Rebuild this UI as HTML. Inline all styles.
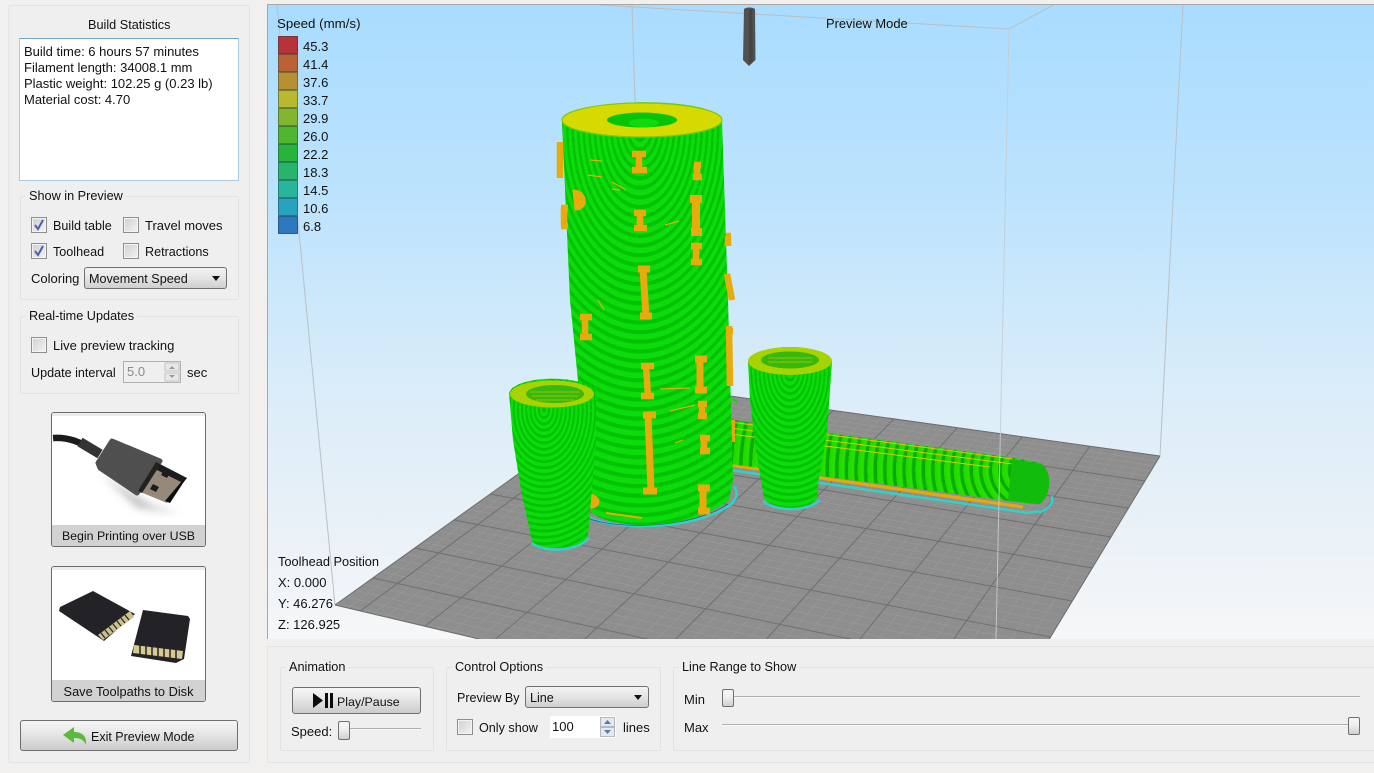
<!DOCTYPE html>
<html><head><meta charset="utf-8">
<style>
html,body{margin:0;padding:0;background:#f1f0ef;width:1374px;height:773px;overflow:hidden}
body{position:relative;font-family:"Liberation Sans",sans-serif;font-size:13px;color:#111}
.t{position:absolute;white-space:nowrap;line-height:16px;height:16px}
.s{font-size:12.6px}
.panel{position:absolute;background:#efefef;border:1px solid #e0e5e9;box-sizing:border-box;border-radius:2px}
.grp{position:absolute;border:1px solid #dfe3e6;box-sizing:border-box;background:#efefef;border-radius:2px}
.title{position:absolute;background:#efefef;padding:0 3px;white-space:nowrap;line-height:16px;font-size:12.7px}
.cb{position:absolute;width:16px;height:16px;box-sizing:border-box;border:1px solid #8e8f8f;background:linear-gradient(135deg,#cfcfcf,#f4f4f4);box-shadow:inset 0 0 0 1px #f4f4f4;}
.cb svg{position:absolute;left:0;top:0}
.combo{position:absolute;box-sizing:border-box;border:1px solid #707070;border-radius:3px;background:linear-gradient(#f3f3f3,#e6e6e6 45%,#cfcfcf);line-height:22px;padding-left:4px;white-space:nowrap;font-size:12.6px}
.combo:after{content:"";position:absolute;right:6px;top:8px;border-left:4px solid transparent;border-right:4px solid transparent;border-top:5px solid #111}
.btn{position:absolute;box-sizing:border-box;border:1px solid #6f6f6f;border-radius:3px;background:linear-gradient(#f6f6f6,#e8e8e8 40%,#cbcbcb)}
.handle{position:absolute;box-sizing:border-box;width:12px;border:1px solid #707070;border-radius:2px;background:linear-gradient(#f6f6f6,#eeeeee 45%,#cfcfcf)}
.groove{position:absolute;height:1px;background:#b0b0b0;box-shadow:0 1px 0 #fafafa}
.img{position:absolute;box-sizing:border-box;border:1px solid #6a6a6a;border-radius:3px;background:#fff;overflow:hidden}
.img .lab{position:absolute;left:0;right:0;bottom:0;height:21px;background:#d2d2d2;text-align:center;line-height:23px;white-space:nowrap}
.sw{position:absolute;left:278px;width:20px;height:18px;box-sizing:border-box;border:1px solid rgba(40,60,70,.45)}
</style></head><body>

<!-- left panel -->
<div class="panel" style="left:8px;top:5px;width:242px;height:758px"></div>
<div class="t" style="left:88px;top:17px;font-size:12.7px">Build Statistics</div>
<div style="position:absolute;left:19px;top:38px;width:220px;height:143px;box-sizing:border-box;background:#fff;border:1px solid #a9cbe4;border-top-color:#6ea5cf"></div>
<div class="t" style="left:24px;top:44px">Build time: 6 hours 57 minutes</div>
<div class="t" style="left:24px;top:60px">Filament length: 34008.1 mm</div>
<div class="t" style="left:24px;top:76px">Plastic weight: 102.25 g (0.23 lb)</div>
<div class="t" style="left:24px;top:92px">Material cost: 4.70</div>

<div class="grp" style="left:20px;top:196px;width:219px;height:104px"></div>
<div class="title" style="left:26px;top:188px">Show in Preview</div>
<div class="cb" style="left:31px;top:217px"><svg width="14" height="14"><path d="M3 7l3 4 5-9" fill="none" stroke="#4a60a8" stroke-width="2"/></svg></div>
<div class="t s" style="left:53px;top:218px">Build table</div>
<div class="cb" style="left:123px;top:217px"></div>
<div class="t" style="left:145px;top:218px">Travel moves</div>
<div class="cb" style="left:31px;top:243px"><svg width="14" height="14"><path d="M3 7l3 4 5-9" fill="none" stroke="#4a60a8" stroke-width="2"/></svg></div>
<div class="t s" style="left:53px;top:244px">Toolhead</div>
<div class="cb" style="left:123px;top:243px"></div>
<div class="t s" style="left:145px;top:244px">Retractions</div>
<div class="t" style="left:31px;top:271px">Coloring</div>
<div class="combo" style="left:84px;top:267px;width:143px;height:22px">Movement Speed</div>

<div class="grp" style="left:20px;top:316px;width:219px;height:78px"></div>
<div class="title" style="left:26px;top:308px">Real-time Updates</div>
<div class="cb" style="left:31px;top:337px"></div>
<div class="t" style="left:53px;top:338px">Live preview tracking</div>
<div class="t s" style="left:31px;top:365px">Update interval</div>
<div style="position:absolute;left:123px;top:361px;width:58px;height:22px;box-sizing:border-box;border:1px solid #b0b0b0;background:#efefef;color:#8a8a8a;line-height:20px;padding-left:3px">5.0
 <svg style="position:absolute;right:0;top:0" width="16" height="20"><rect x="1" y="1" width="14" height="8" fill="#e8e8e8" stroke="#c4c4c4"/><rect x="1" y="11" width="14" height="8" fill="#e8e8e8" stroke="#c4c4c4"/><path d="M5 7l3-3 3 3zM5 13l3 3 3-3z" fill="#999"/></svg></div>
<div class="t" style="left:187px;top:365px">sec</div>

<div class="img" style="left:51px;top:412px;width:155px;height:135px">
<svg width="153" height="113" style="position:absolute;left:0;top:0">
<defs><filter id="bl"><feGaussianBlur stdDeviation="4"/></filter></defs>
<rect width="153" height="3" fill="#ececec"/>
<path d="M50 62 L100 92 L125 100 L85 95Z" fill="#c4c4c4" filter="url(#bl)"/>
<path d="M1 25 C15 24 28 28 46 40" fill="none" stroke="#1b1b1b" stroke-width="6.500"/>
<path d="M28 29 L48 41" fill="none" stroke="#333" stroke-width="10"/>
<path d="M60 28 L108 48 L85 80 L48 55 L46 50Z" fill="#4f4f4f" stroke="#4f4f4f" stroke-width="5" stroke-linejoin="round"/>
<path d="M105 51 L133 66 L115 90 L86 78Z" fill="#96887a"/>
<path d="M104 49 L135 65 L131 70 L101 55Z" fill="#1c1c1c"/>
<path d="M130 68 L135 64 L118 90 L113 88Z" fill="#0e0e0e"/>
<path d="M112 57l6 3-3 5-6-3zM101 71l6 3-3 5-6-3z" fill="#1c1c1c"/>
<path d="M86 78 L104 49 L108 52 L90 80Z" fill="#222"/>
</svg><div class="lab" style="font-size:12.35px">Begin Printing over USB</div></div>

<div class="img" style="left:51px;top:566px;width:155px;height:136px">
<svg width="153" height="114" style="position:absolute;left:0;top:0">
<rect width="153" height="3" fill="#ececec"/>
<path d="M41 24 L83 47 L52 74 L7 44 L8 40Z" fill="#232327"/>
<path d="M82 50 L51 73 L46 68 L78 44Z" fill="#cbbf8a"/>
<path d="M49 66l4 5M53 63l4 5M57 60l4 5M61 57l4 5M65 54l4 5M69 51l4 5M73 48l4 5" stroke="#232327" stroke-width="1.200"/>
<path d="M91 43 L136 49 L138 52 L132 92 L124 96 L79 89Z" fill="#232327"/>
<path d="M82 78 L131 84 L130 92 L81 86Z" fill="#d6ca94"/>
<path d="M88 78v9M94 79v9M100 80v9M106 80v9M112 81v9M118 82v9M124 83v9" stroke="#232327" stroke-width="1.500"/>
</svg><div class="lab" style="font-size:12.8px">Save Toolpaths to Disk</div></div>

<div class="btn" style="left:20px;top:720px;width:218px;height:31px"></div>
<svg style="position:absolute;left:60px;top:725px" width="30" height="22"><path d="M3 10 L14 2 L14 7 C22 7 27 11 26 20 C24 15 20 13 14 13 L14 18Z" fill="#5cb93a"/></svg>
<div class="t" style="left:91px;top:729px;font-size:12.5px">Exit Preview Mode</div>

<!-- viewport -->
<svg style="position:absolute;left:0;top:0" width="1374" height="773" viewBox="0 0 1374 773">
<defs>
<linearGradient id="sky" x1="0" y1="0" x2="0" y2="1"><stop offset="0" stop-color="#a9dcff"/><stop offset=".3" stop-color="#bce3fd"/><stop offset=".62" stop-color="#dbedf9"/><stop offset=".82" stop-color="#e9f1f7"/><stop offset="1" stop-color="#f6f7f8"/></linearGradient>
<clipPath id="vp"><rect x="268" y="5" width="1106" height="634"/></clipPath>
<radialGradient id="rt" gradientUnits="userSpaceOnUse" cx="0" cy="0" r="5.5" spreadMethod="repeat" gradientTransform="translate(640 128) scale(1 1.75)"><stop offset="0" stop-color="#02c202"/><stop offset=".35" stop-color="#02c202"/><stop offset=".5" stop-color="#0cdc0c"/><stop offset="1" stop-color="#0cdc0c"/></radialGradient>
<radialGradient id="rc" gradientUnits="userSpaceOnUse" cx="0" cy="0" r="4.2" spreadMethod="repeat" gradientTransform="translate(544 410) scale(1 1.5)"><stop offset="0" stop-color="#02c002"/><stop offset=".35" stop-color="#02c002"/><stop offset=".5" stop-color="#0cdc0c"/><stop offset="1" stop-color="#0cdc0c"/></radialGradient>
<radialGradient id="rd" gradientUnits="userSpaceOnUse" cx="0" cy="0" r="4.2" spreadMethod="repeat" gradientTransform="translate(790 372) scale(1 1.6)"><stop offset="0" stop-color="#02c002"/><stop offset=".35" stop-color="#02c002"/><stop offset=".5" stop-color="#0cdc0c"/><stop offset="1" stop-color="#0cdc0c"/></radialGradient>
<radialGradient id="rl" gradientUnits="userSpaceOnUse" cx="0" cy="0" r="8" spreadMethod="repeat" gradientTransform="translate(1040 470) scale(1.2 1)"><stop offset="0" stop-color="#08a800"/><stop offset=".3" stop-color="#08b000"/><stop offset=".42" stop-color="#2ce000"/><stop offset="1" stop-color="#1cd800"/></radialGradient>
</defs>
<rect x="267" y="4" width="1107" height="635" fill="url(#sky)"/>
<rect x="267" y="4" width="1107" height="1" fill="#a8a8a8"/>
<rect x="267" y="4" width="1" height="635" fill="#a8a8a8"/>
<g clip-path="url(#vp)">
<!-- back box lines -->
<path d="M632 5 L644 384" stroke="#b9c0c6" stroke-width="1" fill="none"/>
<path d="M600 5 L1009 29 L1055 4" stroke="#b9bec2" stroke-width="1" fill="none"/>
<path d="M1183 5 L1160 456" stroke="#b9c0c6" stroke-width="1" fill="none"/>
<path d="M277 4 L335 605" stroke="#b9c0c6" stroke-width="1" fill="none"/>
<!-- plate -->
<polygon points="644,384 1160,456 978,757 335,605" fill="#8e8e8e"/>
<g id="minor" stroke="#9a9a9a" stroke-width=".6" fill="none"></g>
<g stroke="#6e6e6e" stroke-width="1" fill="none">
<path d="M617 403L1145 481M588 424L1128 508M557 446L1111 537M525 469L1092 568M490 494L1072 601M454 520L1050 637M415 548L1027 676M373 578L1001 718"/>
<path d="M1090 446L886 735M1022 437L799 715M957 428L716 695M894 419L638 677M834 410L563 659M776 402L492 642M720 395L425 626M665 387L360 611"/>
<path d="M335 605L978 757M1160 456L978 757M644 384L335 605M644 384L1160 456" stroke="#6c6c6c"/>
</g>
<!-- lying cylinder -->
<path d="M730 470 L1022 512 C1030 515 1034 510 1040 512 C1048 510 1054 502 1052 496" fill="none" stroke="#2fd2c8" stroke-width="2.400"/>
<path d="M730 465 L1023 507" fill="none" stroke="#e6a80a" stroke-width="3.200"/>
<path d="M730 420 L1015 458 L1040 463 C1052 470 1052 495 1040 504 L1024 503 L730 464Z" fill="url(#rl)"/>
<path d="M730 422 L1013 459M730 428 L1013 464M730 434L990 467" stroke="#dcc800" stroke-width="1" fill="none"/>
<path d="M1012 459 L1042 464 C1052 472 1052 495 1040 504 L1008 501Z" fill="#12bc0a"/>
<path d="M732 399l6 3" stroke="#0cd80c" stroke-width="2"/>
<path d="M730 420h5v22h-5z" fill="#e6a80a"/>
<!-- tower raft -->
<path d="M586 516 C610 530 690 532 730 505 C738 498 738 492 734 486" fill="none" stroke="#2fd2c8" stroke-width="2.600"/>
<path d="M588 518 C612 529 690 530 728 504" fill="none" stroke="#3a55a0" stroke-width=".8"/>
<!-- tower -->
<path d="M562 122 L570 300 L591 512 C610 530 690 532 729 500 L733 480 L728 300 L722 120 C716 96 568 96 562 122Z" fill="url(#rt)"/>
<!-- orange -->
<g fill="none" stroke="#e8aa0c" stroke-width="6.500">
<path d="M560 142V178"/>
<path d="M632 154h14M639 154V170M632 170h15"/>
<path d="M573 190 C588 190 590 210 575 210Z" fill="#e8aa0c" stroke-width="1"/>
<path d="M561 208h7M564 208V226M561 226h7"/>
<path d="M694 165h7M697 165V177M693 177h9"/>
<path d="M690 199h12M696 199V232M691 232h11" stroke-width="8"/>
<path d="M634 213h12M640 213V228M634 228h13"/>
<path d="M691 246h11M696 246V262M691 262h11"/>
<path d="M726 236h5M728 236V246"/>
<path d="M727 274 L732 300"/>
<path d="M638 269h12M643 269 L646 316M640 316h12" stroke-width="7"/>
<path d="M580 317h12M585 317V337M580 337h12"/>
<path d="M728 331h5"/>
<path d="M641 366h13M646 366 L648 396M641 396h13"/>
<path d="M695 359h12M700 359V390M695 390h12" stroke-width="7"/>
<path d="M729 326 L730 386"/>
<path d="M643 415h13M648 415 L651 491M643 491h14" stroke-width="7"/>
<path d="M698 404h9M702 404V416M698 416h9"/>
<path d="M700 438h10M704 438V451M700 451h10"/>
<path d="M698 488h12M703 488V511M698 511h12" stroke-width="7"/>
<path d="M590 494 C602 496 602 508 590 508Z" fill="#e8aa0c" stroke-width="1"/>
<path d="M606 513 L642 518" stroke-width="2"/>
<path d="M670 411 L695 405M675 443l8-3M690 388l-30 1M590 160l12 1M588 175l14 2M612 182l14 8M620 190l-8-1M598 300l6 10M665 225l14-4" stroke-width="1.200"/>
</g>
<!-- tower top -->
<ellipse cx="642" cy="120" rx="80" ry="17" fill="#d6da00"/>
<ellipse cx="642" cy="120" rx="80" ry="17" fill="none" stroke="#7ecc00" stroke-width="1.200"/>
<ellipse cx="642" cy="120" rx="35" ry="7.500" fill="#06c406"/>
<ellipse cx="644" cy="123" rx="15" ry="4.500" fill="#0cdc0c"/>
<!-- small cup -->
<path d="M531 543 C546 553 576 552 589 538" fill="none" stroke="#2fd2c8" stroke-width="2.400"/>
<path d="M509 393 L513 440 L521 490 L532 541 C540 551 580 551 588 536 L596 440 L596 393 C590 374 515 374 509 393Z" fill="url(#rc)"/>
<ellipse cx="552" cy="394" rx="42" ry="13.500" fill="#a8d200"/>
<ellipse cx="555" cy="394" rx="29" ry="9" fill="#36b80c"/>
<path d="M530 392h50M532 396h46M536 400h38" stroke="#b8c800" stroke-width=".8"/>
<!-- right cup -->
<path d="M763 501 C775 512 808 512 820 500" fill="none" stroke="#2fd2c8" stroke-width="2.400"/>
<path d="M748 362 L750 400 L756 450 L764 498 C772 511 810 511 817 498 L819 477 L827 433 L832 362 C826 342 754 342 748 362Z" fill="url(#rd)"/>
<ellipse cx="790" cy="361" rx="42" ry="14" fill="#a8d200"/>
<ellipse cx="790" cy="360" rx="29" ry="8.500" fill="#36b80c"/>
<path d="M768 358h44M768 362h44" stroke="#b8c800" stroke-width=".8"/>
<!-- front line -->
<path d="M1009 29 L996 639" stroke="#c6ccd0" stroke-width="1" fill="none" opacity=".9"/>
<!-- toolhead -->
<path d="M744 9 C746 7 753 7 755 9 L755.500 60 L749 66 L743 60Z" fill="#515151"/>
<path d="M752 9 L753 60 L749 65 L749 9Z" fill="#3d3d3d" opacity=".6"/>
</g>
</svg>

<div class="t" style="left:826px;top:16px;font-size:12.9px">Preview Mode</div>
<div class="t" style="left:277px;top:16px;font-size:13.3px">Speed (mm/s)</div>
<div class="sw" style="top:36px;background:#b93238"></div><div class="t" style="left:303px;top:39px">45.3</div>
<div class="sw" style="top:54px;background:#bb6235"></div><div class="t" style="left:303px;top:57px">41.4</div>
<div class="sw" style="top:72px;background:#b79033"></div><div class="t" style="left:303px;top:75px">37.6</div>
<div class="sw" style="top:90px;background:#b9b92f"></div><div class="t" style="left:303px;top:93px">33.7</div>
<div class="sw" style="top:108px;background:#84b52e"></div><div class="t" style="left:303px;top:111px">29.9</div>
<div class="sw" style="top:126px;background:#4fb62f"></div><div class="t" style="left:303px;top:129px">26.0</div>
<div class="sw" style="top:144px;background:#26b538"></div><div class="t" style="left:303px;top:147px">22.2</div>
<div class="sw" style="top:162px;background:#26b56b"></div><div class="t" style="left:303px;top:165px">18.3</div>
<div class="sw" style="top:180px;background:#27b59c"></div><div class="t" style="left:303px;top:183px">14.5</div>
<div class="sw" style="top:198px;background:#27a2bf"></div><div class="t" style="left:303px;top:201px">10.6</div>
<div class="sw" style="top:216px;background:#2d77bf"></div><div class="t" style="left:303px;top:219px">6.8</div>

<div class="t" style="left:278px;top:554px;font-size:12.8px">Toolhead Position</div>
<div class="t" style="left:278px;top:575px">X: 0.000</div>
<div class="t" style="left:278px;top:596px">Y: 46.276</div>
<div class="t" style="left:278px;top:617px">Z: 126.925</div>

<!-- bottom panel -->
<div class="panel" style="left:267px;top:646px;width:1120px;height:117px"></div>
<div class="grp" style="left:280px;top:667px;width:154px;height:84px"></div>
<div class="title" style="left:286px;top:659px">Animation</div>
<div class="btn" style="left:292px;top:687px;width:129px;height:27px"></div>
<svg style="position:absolute;left:313px;top:693px" width="22" height="16"><path d="M0 0L10 7.500L0 15Z M12 0h3v15h-3z M17 0h3v15h-3z" fill="#0c0c0c"/></svg>
<div class="t" style="left:337px;top:694px;font-size:12.4px">Play/Pause</div>
<div class="t" style="left:291px;top:724px">Speed:</div>
<div class="groove" style="left:340px;top:728px;width:81px"></div>
<div class="handle" style="left:338px;top:721px;height:19px"></div>

<div class="grp" style="left:446px;top:667px;width:215px;height:84px"></div>
<div class="title" style="left:452px;top:659px">Control Options</div>
<div class="t" style="left:457px;top:690px;font-size:12.5px">Preview By</div>
<div class="combo" style="left:525px;top:686px;width:124px;height:22px">Line</div>
<div class="cb" style="left:457px;top:719px"></div>
<div class="t" style="left:479px;top:720px;font-size:12.6px">Only show</div>
<div style="position:absolute;left:550px;top:716px;width:66px;height:22px;background:#fff;line-height:22px;padding-left:2px;box-sizing:border-box">100
<svg style="position:absolute;right:1px;top:1px" width="15" height="20"><rect x=".5" y=".5" width="14" height="9" fill="#e4e8ef" stroke="#b4b8c0"/><rect x=".5" y="10.500" width="14" height="9" fill="#e4e8ef" stroke="#b4b8c0"/><path d="M4 7l3.500-4 3.500 4zM4 13l3.500 4 3.500-4z" fill="#5a78b4"/></svg></div>
<div class="t" style="left:623px;top:720px">lines</div>

<div class="grp" style="left:673px;top:667px;width:720px;height:84px"></div>
<div class="title" style="left:679px;top:659px">Line Range to Show</div>
<div class="t" style="left:684px;top:692px">Min</div>
<div class="groove" style="left:724px;top:696px;width:636px"></div>
<div class="handle" style="left:722px;top:689px;height:18px"></div>
<div class="t" style="left:684px;top:720px">Max</div>
<div class="groove" style="left:722px;top:724px;width:630px"></div>
<div class="handle" style="left:1348px;top:717px;height:18px"></div>

<script>
(function(){var g=document.getElementById('minor');if(!g)return;
function P(u,v){var w=-0.14528*u-0.23863*v+1;return [(347.5*u-388.9*v+644)/w,(5.75*u+76.6*v+384)/w];}
var d='',i,a,b;
for(i=0;i<45;i++){var v=i*0.0226;a=P(0,v);b=P(1,v);d+='M'+a[0].toFixed(1)+' '+a[1].toFixed(1)+'L'+b[0].toFixed(1)+' '+b[1].toFixed(1);}
for(i=0;i<43;i++){var u=1-i*0.0238;a=P(u,0);b=P(u,1);d+='M'+a[0].toFixed(1)+' '+a[1].toFixed(1)+'L'+b[0].toFixed(1)+' '+b[1].toFixed(1);}
var p=document.createElementNS('http://www.w3.org/2000/svg','path');p.setAttribute('d',d);g.appendChild(p);})();
</script>
</body></html>
